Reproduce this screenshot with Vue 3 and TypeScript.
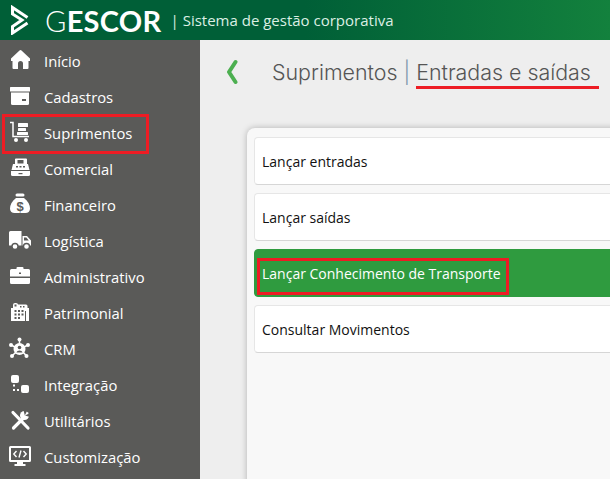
<template>
  <div class="page">
    <header class="topbar">
      <svg class="logo" viewBox="0 0 20 30" width="20" height="30">
        <path d="M17.500 12.500 L2.500 2.500 V9 L12 15 L2.500 21.500 V28 L17.500 18" fill="none" stroke="#fff" stroke-width="3" />
      </svg>
      <span class="brand"><span class="brand-g">G</span><b>ESCOR</b></span>
      <span class="tagline">| Sistema de gestão corporativa</span>
    </header>
    <div class="body">
      <nav class="sidebar">
        <a v-for="item in menu" :key="item.label" class="menu-item">
          <svg class="menu-icon" viewBox="0 0 24 24" width="24" height="24" v-html="item.icon"></svg>
          <span>{{ item.label }}</span>
          <i v-if="item.marked" class="mark mark-menu"></i>
        </a>
      </nav>
      <main class="content">
        <div class="heading">
          <svg class="back" viewBox="0 0 12 26" width="12" height="26">
            <path d="M9.500 3 L3 13 L9.500 23" fill="none" stroke="#4caf50" stroke-width="4" stroke-linecap="round" stroke-linejoin="round" />
          </svg>
          <h1>Suprimentos <span class="sep">|</span> <span class="current">Entradas e saídas<i class="underline"></i></span></h1>
        </div>
        <section class="card">
          <a v-for="row in rows" :key="row.label" class="row" :class="{ active: row.active }">
            <span class="row-label">{{ row.label }}<i v-if="row.active" class="mark mark-row"></i></span>
          </a>
        </section>
      </main>
    </div>
  </div>
</template>

<script setup lang="ts">
interface MenuItem {
  label: string;
  icon: string;
  marked?: boolean;
}

// icons are drawn in white with the sidebar colour for the cut-outs
const menu: MenuItem[] = [
  {
    label: "Início",
    icon: '<path d="M12.500 1 Q13 1 13.500 1.500 L22 9.500 V12 H20.500 V19 Q20.500 20 19.500 20 H15 V14.500 Q15 12 12.500 12 Q10 12 10 14.500 V20 H5.500 Q4.500 20 4.500 19 V12 H3 V9.500 L11.500 1.500 Q12 1 12.500 1 Z"/>',
  },
  {
    label: "Cadastros",
    icon: '<rect x="2" y="2" width="20" height="4.500" rx="0.500"/><path d="M3 7.500 H21 V18.500 Q21 20 19.500 20 H4.500 Q3 20 3 18.500 Z"/><rect x="14" y="14" width="4" height="2" fill="#5a5a58"/>',
  },
  {
    label: "Suprimentos",
    marked: true,
    icon: '<path d="M2 1.500 H5 V15.500 H21" fill="none" stroke="#fff" stroke-width="1.500"/><rect x="10" y="2" width="10" height="4" rx="0.500"/><rect x="10" y="7" width="8" height="3" rx="0.500"/><rect x="9" y="11" width="11" height="3" rx="0.500"/><circle cx="8" cy="19" r="2"/><circle cx="18" cy="19" r="2"/>',
  },
  {
    label: "Comercial",
    icon: '<path d="M7 2 Q7 1.500 8 1.500 H18 Q19 1.500 19 2.500 V7 H20 L21.500 13 H3.500 L5 7 H7 Z"/><rect x="9.500" y="3" width="6" height="3.500" fill="#5a5a58"/><g fill="#5a5a58"><rect x="8" y="9" width="2" height="1.500"/><rect x="11.500" y="9" width="2" height="1.500"/><rect x="15" y="9" width="2" height="1.500"/></g><path d="M3 14 H22 V17.500 Q22 19 20.500 19 H4.500 Q3 19 3 17.500 Z"/><rect x="10.500" y="16" width="4" height="1.200" fill="#5a5a58"/>',
  },
  {
    label: "Financeiro",
    icon: '<rect x="7.500" y="0.500" width="9" height="3" rx="1.500"/><path d="M8 5 H16 C20 8 22 12 22 15.500 C22 18.500 20 20 17.500 20 H6.500 C4 20 2 18.500 2 15.500 C2 12 4 8 8 5 Z"/><text x="12" y="17.500" font-size="13" font-weight="700" text-anchor="middle" fill="#5a5a58" font-family="Liberation Sans, sans-serif">$</text>',
  },
  {
    label: "Logística",
    icon: '<path d="M2.500 2 H13.500 V16.500 H1 V3.500 Q1 2 2.500 2 Z M14.500 7 H19 L23 11.500 V16.500 H14.500 Z"/><path d="M16 8.500 H18.300 L20.800 11.500 H16 Z" fill="#5a5a58"/><circle cx="7" cy="17.500" r="3" stroke="#5a5a58" stroke-width="1.400"/><circle cx="18.500" cy="17.500" r="3" stroke="#5a5a58" stroke-width="1.400"/>',
  },
  {
    label: "Administrativo",
    icon: '<rect x="8.500" y="2" width="7" height="3" rx="1"/><path d="M3.500 4 H20.500 Q22 4 22 5.500 V11.500 H2 V5.500 Q2 4 3.500 4 Z M2 13 H22 V17.500 Q22 19 20.500 19 H3.500 Q2 19 2 17.500 Z"/><rect x="11" y="7.500" width="2" height="1.500" fill="#5a5a58"/>',
  },
  {
    label: "Patrimonial",
    icon: '<path d="M5 6 V4 Q5 2 7 2 H8 Q10 2 10 3.500 H18 Q19.500 3.500 19.500 5 V7 H21 V20 H3 V7 H5 Z"/><g fill="#5a5a58"><rect x="6.500" y="3.500" width="2" height="2"/><rect x="12" y="5" width="1.500" height="1.500"/><rect x="15" y="5" width="1.500" height="1.500"/><rect x="6.500" y="9" width="2" height="2"/><rect x="10" y="9" width="2" height="2"/><rect x="13.500" y="9" width="2" height="2"/><rect x="6.500" y="12.500" width="2" height="2"/><rect x="10" y="12.500" width="2" height="2"/><rect x="13.500" y="12.500" width="2" height="2"/><rect x="6.500" y="16" width="2" height="2"/><rect x="10" y="16" width="2" height="2"/><rect x="17" y="10" width="1" height="10"/></g>',
  },
  {
    label: "CRM",
    icon: '<g fill="#fff"><circle cx="11.500" cy="2.500" r="2"/><circle cx="3" cy="8" r="2"/><circle cx="20" cy="8" r="2"/><circle cx="4" cy="19" r="2"/><circle cx="18.500" cy="19" r="2"/></g><path d="M11.500 2.500 V8 M3 8 L8 10.500 M20 8 L15 10.500 M4 19 L8 15 M18.500 19 L15 15" stroke="#fff" stroke-width="1.500"/><circle cx="11.500" cy="12" r="6"/><circle cx="11.500" cy="10.500" r="1.800" fill="#5a5a58"/><path d="M8.500 15.500 C9 12.800 14 12.800 14.500 15.500 Z" fill="#5a5a58"/>',
  },
  {
    label: "Integração",
    icon: '<rect x="3" y="2" width="8" height="8" rx="2"/><rect x="13" y="12" width="8" height="8" rx="2"/><rect x="5" y="11.500" width="2" height="2"/><rect x="5" y="16" width="2" height="2"/><rect x="9" y="16" width="2" height="2"/>',
  },
  {
    label: "Utilitários",
    icon: '<path d="M5 3.500 L20 19" stroke="#fff" stroke-width="3.200" stroke-linecap="round"/><path d="M5.500 19 L15 9.500" stroke="#fff" stroke-width="3.200" stroke-linecap="round"/><circle cx="16.500" cy="6.500" r="4.500"/><path d="M16.800 6.500 L19.500 1 H15.500 Z M17 6.500 L22 8 V4 Z" fill="#5a5a58"/>',
  },
  {
    label: "Customização",
    icon: '<path fill-rule="evenodd" d="M2.500 1 H21.500 A1.500 1.500 0 0 1 23 2.500 V15.500 A1.500 1.500 0 0 1 21.500 17 H15 V19 H17.500 V21 H6.500 V19 H9 V17 H2.500 A1.500 1.500 0 0 1 1 15.500 V2.500 A1.500 1.500 0 0 1 2.500 1 Z M3 3 V15 H21 V3 Z"/><path d="M8.500 6 L5.800 9 L8.500 12 M15.500 6 L18.200 9 L15.500 12 M13 5.500 L11 12.500" fill="none" stroke="#fff" stroke-width="1.400"/>',
  },
];

const rows = [
  { label: "Lançar entradas", active: false },
  { label: "Lançar saídas", active: false },
  { label: "Lançar Conhecimento de Transporte", active: true },
  { label: "Consultar Movimentos", active: false },
];
</script>

<style>
html,
body {
  margin: 0;
  overflow: hidden;
}
</style>

<style scoped>
.page {
  width: 610px;
  height: 479px;
  overflow: hidden;
  display: flex;
  flex-direction: column;
  font-family: "Open Sans", "Noto Sans", sans-serif;
  background: #eeeeee;
}
.topbar {
  height: 40px;
  flex: none;
  display: flex;
  align-items: center;
  padding-left: 10px;
  color: #fff;
  background: linear-gradient(90deg, #005f37 0%, #005f37 50%, #13813d 100%);
}
.logo {
  margin-right: 15px;
}
.brand {
  font-family: "Lato", sans-serif;
  font-size: 29px;
  letter-spacing: 0.3px;
}
.brand-g {
  font-weight: 300;
}
.brand b {
  font-weight: 700;
}
.tagline {
  margin-left: 9px;
  font-size: 15px;
  color: #dcefe4;
}
.body {
  flex: 1;
  display: flex;
  min-height: 0;
}
.sidebar {
  width: 200px;
  flex: none;
  padding-top: 3px;
  background: #5a5a58;
}
.menu-item {
  position: relative;
  height: 36px;
  display: flex;
  align-items: center;
  gap: 12px;
  padding-left: 8px;
  font-size: 14.8px;
  color: #fff;
}
.menu-icon {
  width: 24px;
  height: 24px;
  flex: none;
  fill: #fff;
}
.mark {
  position: absolute;
  box-sizing: border-box;
  border: 3px solid #ed1c24;
}
.mark-menu {
  left: 2px;
  top: -1px;
  width: 147px;
  height: 40px;
}
.content {
  flex: 1;
  min-width: 0;
}
.heading {
  display: flex;
  align-items: center;
  height: 64px;
  padding-left: 26px;
}
h1 {
  position: relative;
  margin: 0 0 0 34px;
  font-family: "Inter", sans-serif;
  font-size: 21.4px;
  font-weight: 300;
  color: #555;
  white-space: nowrap;
}
.sep {
  color: #7f97ad;
}
.current {
  position: relative;
}
.underline {
  position: absolute;
  left: 0;
  right: -8px;
  bottom: -4px;
  height: 3px;
  background: #ed1c24;
}
.card {
  margin: 24px -20px 0 47px;
  padding: 9px 7px;
  height: 360px;
  display: flex;
  flex-direction: column;
  gap: 8px;
  border-radius: 8px;
  background: #f8f8f8;
  box-shadow: 0 0 6px rgba(0, 0, 0, 0.25);
}
.row {
  height: 48px;
  flex: none;
  box-sizing: border-box;
  display: flex;
  align-items: center;
  padding-left: 7px;
  font-size: 14px;
  color: #111;
  background: #fff;
  border: 1px solid #e6e6e6;
  border-bottom-color: #d6d6d6;
  border-radius: 4px;
}
.row.active {
  color: #fff;
  background: #2f9b3f;
  border-color: #2f9b3f;
}
.row-label {
  position: relative;
}
.mark-row {
  left: -5px;
  top: -6px;
  width: 252px;
  height: 37px;
}
</style>
